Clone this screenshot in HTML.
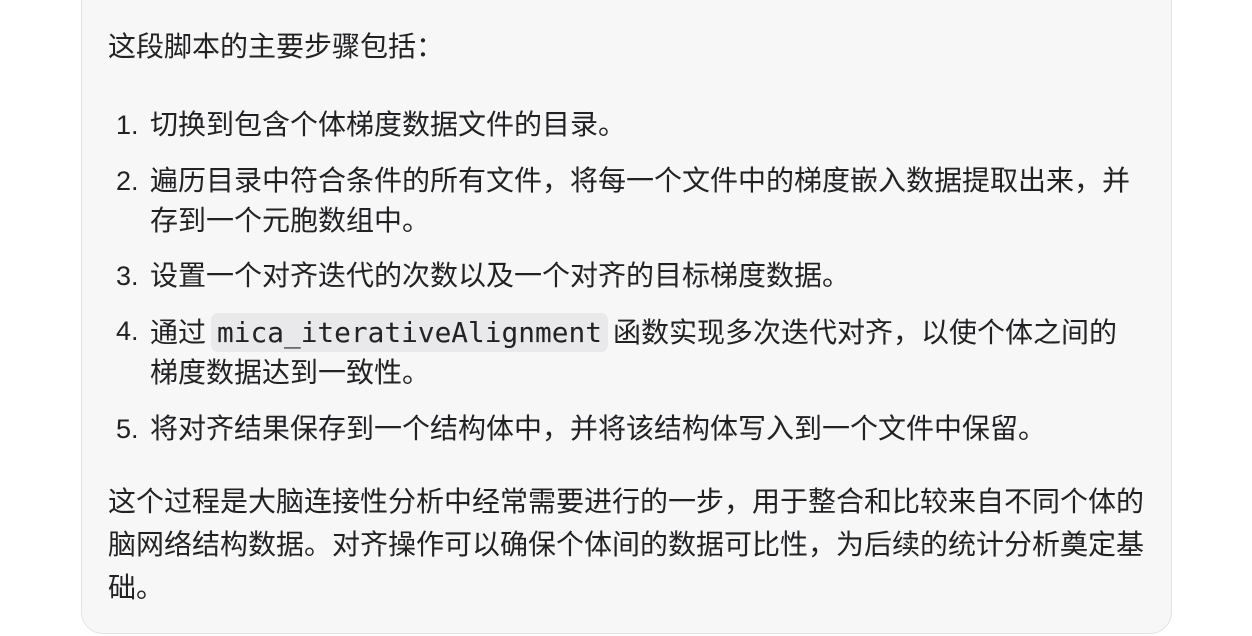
<!DOCTYPE html>
<html><head><meta charset="utf-8"><style>
html,body{margin:0;padding:0;width:1252px;height:636px;overflow:hidden;background:#fff;}
.card{position:absolute;left:81px;top:-40px;width:1089px;height:672px;background:#f7f7f8;border:1px solid #e3e3e6;border-radius:22px;}
.t{position:absolute;font-family:"Liberation Sans","Noto Sans CJK SC",sans-serif;font-size:28px;color:#222225;white-space:nowrap;line-height:40px;}
.n{position:absolute;font-family:"Liberation Sans","Noto Sans CJK SC",sans-serif;font-size:27px;color:#222225;line-height:40px;}
code{display:inline-block;font-family:"DejaVu Sans Mono","Liberation Mono",monospace;font-size:27.8px;line-height:39px;background:#e9e9eb;border-radius:7px;padding:0 6px;margin:0 5px 0 5px;vertical-align:top;}
</style></head><body>
<div class="card"></div>
<div class="t" style="left:108px;top:27px">这段脚本的主要步骤包括：</div>
<div class="n" style="left:116px;top:105px">1.</div>
<div class="t" style="left:150px;top:105px">切换到包含个体梯度数据文件的目录。</div>
<div class="n" style="left:116px;top:161px">2.</div>
<div class="t" style="left:150px;top:161px">遍历目录中符合条件的所有文件，将每一个文件中的梯度嵌入数据提取出来，并</div>
<div class="t" style="left:150px;top:201px">存到一个元胞数组中。</div>
<div class="n" style="left:116px;top:256px">3.</div>
<div class="t" style="left:150px;top:256px">设置一个对齐迭代的次数以及一个对齐的目标梯度数据。</div>
<div class="n" style="left:116px;top:311px">4.</div>
<div class="t" style="left:150px;top:313px">通过<code>mica_iterativeAlignment</code>函数实现多次迭代对齐，以使个体之间的</div>
<div class="t" style="left:150px;top:353px">梯度数据达到一致性。</div>
<div class="n" style="left:116px;top:409px">5.</div>
<div class="t" style="left:150px;top:409px">将对齐结果保存到一个结构体中，并将该结构体写入到一个文件中保留。</div>
<div class="t" style="left:108px;top:482px">这个过程是大脑连接性分析中经常需要进行的一步，用于整合和比较来自不同个体的</div>
<div class="t" style="left:108px;top:525px">脑网络结构数据。对齐操作可以确保个体间的数据可比性，为后续的统计分析奠定基</div>
<div class="t" style="left:108px;top:568px">础。</div>
</body></html>
